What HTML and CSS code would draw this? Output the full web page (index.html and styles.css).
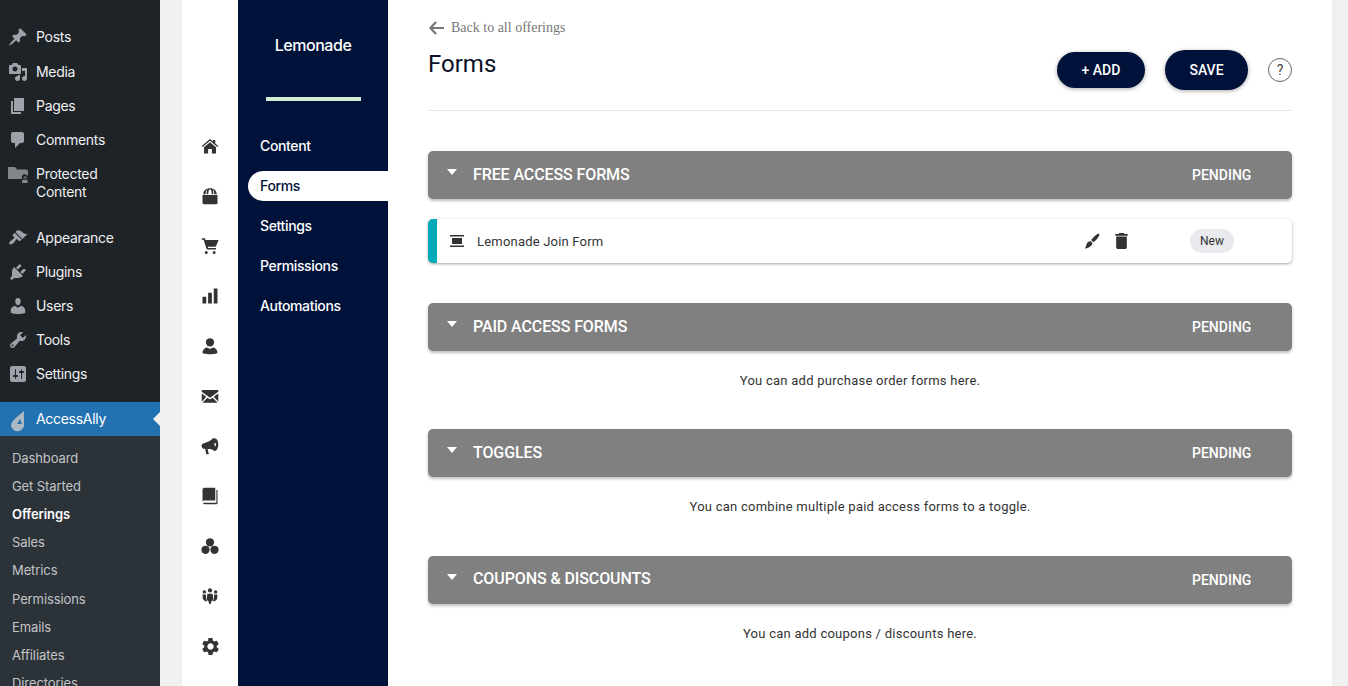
FILE: index.html
```html
<!DOCTYPE html>
<html lang="en">

<head>
    <meta charset="UTF-8">
    <meta name="viewport" content="width=device-width, initial-scale=1.0">
    <title>Forms - AccessAlly</title>
    <link rel="stylesheet" href="styles.css">
</head>

<body>
    <div class="wrap">
        <!-- WordPress admin menu -->
        <nav class="wp-menu">
            <a class="wp-item"><svg class="wp-icon" viewBox="0 0 20 20"><path d="M10.44 3.02l1.82-1.82 6.36 6.35-1.83 1.82c-1.05-.68-2.48-.57-3.41.36l-.75.75c-.92.93-1.04 2.35-.35 3.41l-1.83 1.82-2.41-2.41-2.8 2.79c-.42.42-3.38 2.71-3.8 2.29s1.86-3.39 2.28-3.81l2.79-2.79L4.1 9.36l1.83-1.82c1.05.69 2.48.57 3.4-.36l.75-.75c.93-.92 1.05-2.35.36-3.41z"/></svg>Posts</a>
            <a class="wp-item"><svg class="wp-icon" viewBox="0 0 20 20"><path d="M13 11V4c0-.55-.45-1-1-1h-1.67L9 1H5L3.67 3H2c-.55 0-1 .45-1 1v7c0 .55.45 1 1 1h10c.55 0 1-.45 1-1zM7 4.5c1.38 0 2.5 1.12 2.5 2.5S8.38 9.5 7 9.5 4.5 8.38 4.5 7 5.62 4.5 7 4.5zM14 6h5v10.5c0 1.38-1.12 2.5-2.5 2.5S14 17.88 14 16.5s1.12-2.5 2.5-2.5c.17 0 .34.02.5.05V9h-3V6zm-4 8.05V13h2v3.5c0 1.38-1.12 2.5-2.5 2.5S7 17.88 7 16.5 8.12 14 9.5 14c.17 0 .34.02.5.05z"/></svg>Media</a>
            <a class="wp-item"><svg class="wp-icon" viewBox="0 0 20 20"><path d="M6 15V2h10v13H6zm-1 1h8v2H3V5h2v11z"/></svg>Pages</a>
            <a class="wp-item"><svg class="wp-icon" viewBox="0 0 20 20"><path d="M5 2h9c1.1 0 2 .9 2 2v7c0 1.1-.9 2-2 2h-2l-5 5v-5H5c-1.1 0-2-.9-2-2V4c0-1.1.9-2 2-2z"/></svg>Comments</a>
            <a class="wp-item wp-item-tall"><svg class="wp-icon wp-icon-folder" viewBox="0 0 20 16"><path d="M0 0h7l2 2.500h9.500c.8 0 1.500.7 1.500 1.500v4.600h-1.200a2.600 2.600 0 0 0-4.900 1V12H0z"/><path d="M16 13h3.600v3H14v-3zM15.600 12.600v-1.800a1.500 1.500 0 0 1 3 0v1.800h-.9v-1.800a.6.6 0 0 0-1.200 0v1.800z"/></svg>Protected Content</a>
            <a class="wp-item wp-item-first"><svg class="wp-icon" viewBox="0 0 20 20"><path d="M14.480 11.060L7.410 3.990l1.500-1.500c.5-.56 2.300-.47 3.510.32 1.210.8 1.430 1.280 2.910 2.100 1.180.64 2.450 1.260 4.450.85zm-.71.71L6.700 4.700 4.930 6.470c-.39.39-.39 1.020 0 1.410l1.060 1.060c.39.39.39 1.030 0 1.420-.6.6-1.430 1.110-2.210 1.690-.35.26-.7.53-1.010.84C1.430 13.230.78 15.400 1.500 16.120c.71.72 2.890.07 4.230-1.280.31-.31.58-.66.84-1.010.58-.78 1.090-1.610 1.690-2.210.39-.39 1.030-.39 1.420 0l1.060 1.060c.39.39 1.020.39 1.410 0z"/></svg>Appearance</a>
            <a class="wp-item"><svg class="wp-icon" viewBox="0 0 20 20"><path d="M13.110 4.360L9.870 7.600 8 5.730l3.240-3.240c.35-.34 1.050-.2 1.560.32.52.51.66 1.210.31 1.550zm-8 1.770l.91-1.120 9.010 9.010-1.190.84c-.71.71-2.630 1.160-3.820 1.160H6.140L4.900 17.260c-.59.59-1.540.59-2.120 0-.59-.58-.59-1.530 0-2.120l1.240-1.240v-3.880c0-1.130.4-3.190 1.090-3.890zm7.260 3.970l3.240-3.240c.34-.35 1.040-.21 1.550.31.52.51.66 1.210.31 1.550l-3.240 3.250z"/></svg>Plugins</a>
            <a class="wp-item"><svg class="wp-icon" viewBox="0 0 20 20"><path d="M10 9.250c-2.270 0-2.730-3.440-2.730-3.440C7 4.020 7.820 2 9.970 2c2.160 0 2.980 2.020 2.710 3.810 0 0-.41 3.440-2.680 3.440zm0 2.570L12.720 10c2.390 0 4.520 2.330 4.520 4.530v2.490s-3.650 1.130-7.240 1.130c-3.650 0-7.240-1.130-7.240-1.130v-2.490c0-2.250 1.940-4.480 4.470-4.480z"/></svg>Users</a>
            <a class="wp-item"><svg class="wp-icon" viewBox="0 0 20 20"><path d="M16.680 9.770c-1.340 1.340-3.300 1.670-4.950.99l-5.410 6.520c-.99.99-2.590.99-3.580 0s-.99-2.590 0-3.570l6.520-5.420c-.68-1.650-.35-3.610.99-4.950 1.280-1.280 3.120-1.620 4.720-1.060l-2.890 2.890 2.820 2.820 2.860-2.870c.53 1.580.18 3.390-1.080 4.650zM3.810 16.210c.4.39 1.040.39 1.430 0 .4-.4.4-1.040 0-1.430-.39-.4-1.030-.4-1.430 0-.39.39-.39 1.030 0 1.430z"/></svg>Tools</a>
            <a class="wp-item"><svg class="wp-icon" viewBox="0 0 20 20"><path d="M18 16V4c0-1.100-.9-2-2-2H4c-1.100 0-2 .9-2 2v12c0 1.100.9 2 2 2h12c1.100 0 2-.9 2-2zM8 11h1c.55 0 1 .45 1 1s-.45 1-1 1H8v1.500c0 .28-.22.5-.5.5s-.5-.22-.5-.5V13H6c-.55 0-1-.45-1-1s.45-1 1-1h1V5.500c0-.28.22-.5.5-.5s.5.22.5.5V11zm5-2h-1c-.55 0-1-.45-1-1s.45-1 1-1h1V5.500c0-.28.22-.5.5-.5s.5.22.5.5V7h1c.55 0 1 .45 1 1s-.45 1-1 1h-1v5.500c0 .28-.22.5-.5.5s-.5-.22-.5-.5V9z"/></svg>Settings</a>
            <a class="wp-item wp-item-current"><svg class="wp-icon wp-icon-drop" viewBox="0 0 20 24"><path d="M14 1v12a6.500 6.500 0 1 1-13 3c0-6 8-10 13-15z" fill="#aeb9c1"/><path d="M10 9l1.800 5H7.200z" fill="#2271b1"/></svg>AccessAlly</a>
            <div class="wp-submenu">
                <a class="wp-sub">Dashboard</a>
                <a class="wp-sub">Get Started</a>
                <a class="wp-sub wp-sub-active">Offerings</a>
                <a class="wp-sub">Sales</a>
                <a class="wp-sub">Metrics</a>
                <a class="wp-sub">Permissions</a>
                <a class="wp-sub">Emails</a>
                <a class="wp-sub">Affiliates</a>
                <a class="wp-sub">Directories</a>
            </div>
        </nav>

        <div class="panel">
            <!-- Icon rail -->
            <div class="rail">
                <span class="rail-item"><svg viewBox="0 0 24 24"><path d="M12 2.500L1 12l1.200 1.400L12 5l9.800 8.400L23 12l-4-3.500V4h-3v2z"/><path d="M12 7l-8 6.800V22h5.500v-6h5v6H20v-8.200z"/></svg></span>
                <span class="rail-item"><svg viewBox="0 0 24 24"><path d="M2 10.500h20V21a2 2 0 0 1-2 2H4a2 2 0 0 1-2-2z"/><path d="M3 9.500C3 4.500 7 1.500 12 1.500s9 3 9 8h-3.200c0-3.200-.8-5.500-2.300-6.300.8 1.600 1 4 1 6.300h-2.200c0-3-.4-5.500-2.300-6.800-1.900 1.300-2.300 3.800-2.300 6.800H7.500c0-2.300.2-4.700 1-6.300C7 4 6.200 6.300 6.200 9.500z"/></svg></span>
                <span class="rail-item"><svg viewBox="0 0 24 24"><path d="M7 18.500a2 2 0 1 0 0 4 2 2 0 0 0 0-4zM1 1.500v2h2.500l3.600 11.500c.2.800.9 1.500 1.900 1.500h11v-2H9.500l-.5-1.500h9.500c.9 0 1.500-.5 1.800-1.300L23.500 4H6l-.8-2.500zm16.500 17a2 2 0 1 0 0 4 2 2 0 0 0 0-4z"/></svg></span>
                <span class="rail-item"><svg viewBox="0 0 24 24"><path d="M2 13h5v9H2zM9.500 7.500h5V22h-5zM17 2h5v20h-5z"/></svg></span>
                <span class="rail-item"><svg viewBox="0 0 24 24"><circle cx="12" cy="7" r="5.500"/><path d="M2 21c0-3.500 2.500-6.500 6-7l4 2 4-2c3.500.5 6 3.500 6 7 0 1-4 2-10 2S2 22 2 21z"/></svg></span>
                <span class="rail-item"><svg viewBox="0 0 24 24"><path d="M1 4h22v2.200l-11 8-11-8zM1 8.500l6 4.500-6 6.500zM23 8.500L17 13l6 6.500zM8.600 14.200l3.400 2.500 3.400-2.500 6.800 6.800H1.800z"/></svg></span>
                <span class="rail-item"><svg viewBox="0 0 24 24"><path d="M17 1C13 5 8 7.500 3 8.500 1 9 .5 11 1 13c.4 1.700 1.500 3 3.500 2.700l1 .1L7 23h3.500l-1.700-7c3-.3 7 .5 10.200 2.500z"/><path fill-rule="evenodd" d="M18.500 1.500a4.500 8.500 0 1 1 0 17 4.500 8.500 0 0 1 0-17zm0 6a1.500 2.500 0 1 0 0 5 1.500 2.500 0 0 0 0-5z"/></svg></span>
                <span class="rail-item"><svg viewBox="0 0 24 24"><path d="M2 3.500A2.500 2.500 0 0 1 4.500 1H19v17H5a3 3 0 0 0-3 1z"/><path d="M20.500 4H22v17.500a1.500 1.500 0 0 1-1.500 1.500H5a3 3 0 0 1-2.800-2h18.300z"/></svg></span>
                <span class="rail-item"><svg viewBox="0 0 24 24"><circle cx="12" cy="7" r="5.500"/><circle cx="6" cy="17" r="5.500"/><circle cx="18" cy="17" r="5.500"/></svg></span>
                <span class="rail-item"><svg viewBox="0 0 24 24"><circle cx="12" cy="4.500" r="2.800"/><circle cx="4.500" cy="6.500" r="2.300"/><circle cx="19.500" cy="6.500" r="2.300"/><path d="M8.500 9h7l1 8-2.500 2-1 3.500h-2l-1-3.500-2.500-2z"/><path d="M2 10h4.500l.5 7 1.500 2H5.500L2.500 16zM22 10h-4.500l-.5 7-1.500 2h3l3-3z"/></svg></span>
                <span class="rail-item"><svg class="gear" viewBox="0 0 24 24"><path d="M19.140 12.940c.04-.3.06-.61.06-.94 0-.32-.02-.64-.07-.94l2.030-1.580c.18-.14.23-.41.12-.61l-1.920-3.320c-.12-.22-.37-.29-.59-.22l-2.390.96c-.5-.38-1.030-.7-1.620-.94l-.36-2.540c-.04-.24-.24-.41-.48-.41h-3.840c-.24 0-.43.17-.47.41l-.36 2.540c-.59.24-1.130.57-1.620.94l-2.390-.96c-.22-.08-.47 0-.59.22L2.740 8.870c-.12.21-.08.47.12.61l2.030 1.580c-.05.3-.09.63-.09.94s.02.64.07.94l-2.030 1.580c-.18.14-.23.41-.12.61l1.920 3.320c.12.22.37.29.59.22l2.390-.96c.5.38 1.030.7 1.620.94l.36 2.540c.05.24.24.41.48.41h3.840c.24 0 .44-.17.47-.41l.36-2.540c.59-.24 1.130-.56 1.620-.94l2.390.96c.22.08.47 0 .59-.22l1.920-3.320c.12-.22.07-.47-.12-.61l-2.010-1.580zM12 15.600c-1.980 0-3.600-1.620-3.600-3.600s1.620-3.600 3.600-3.600 3.600 1.620 3.600 3.600-1.620 3.600-3.600 3.600z"/></svg></span>
            </div>

            <!-- Offering sidebar -->
            <div class="offering">
                <div class="offering-name">Lemonade</div>
                <div class="offering-bar"></div>
                <a class="offering-link">Content</a>
                <a class="offering-link active">Forms</a>
                <a class="offering-link">Settings</a>
                <a class="offering-link">Permissions</a>
                <a class="offering-link">Automations</a>
            </div>

            <main class="main">
                <header class="main-head">
                    <div>
                        <a class="back"><svg viewBox="0 0 16 14"><path d="M7 1L1.500 7 7 13M1.500 7H15"/></svg>Back to all offerings</a>
                        <h1>Forms</h1>
                    </div>
                    <div class="actions">
                        <button class="btn btn-add">+ ADD</button>
                        <button class="btn btn-save">SAVE</button>
                        <span class="help">?</span>
                    </div>
                </header>

                <section class="section">
                    <div class="section-bar"><span class="caret"></span><h2>FREE ACCESS FORMS</h2><span class="status">PENDING</span></div>
                    <div class="form-row">
                        <svg class="form-icon" viewBox="0 0 14 12"><path d="M0 0h14v1.500H0zM2 3h10v6H2zM0 10.500h14V12H0z"/></svg>
                        <span class="form-name">Lemonade Join Form</span>
                        <svg class="row-icon brush" viewBox="0 0 18 18"><path d="M16.500.5c.7.4 1 1 .8 1.700-1 3-3.800 6.200-6.800 8.300L8 8C10 5 13.500 1.500 16.500.5zM7.200 9l2.300 2.300c-.3 2.400-2.400 5.500-8.800 6.200 1.500-1.500 1.700-3 2-4.500.4-2 2.500-3.800 4.500-4z"/></svg>
                        <svg class="row-icon trash" viewBox="5 3 14 18"><path d="M6 19c0 1.100.9 2 2 2h8c1.100 0 2-.9 2-2V7H6v12zM19 4h-3.500l-1-1h-5l-1 1H5v2h14V4z"/></svg>
                        <span class="badge">New</span>
                    </div>
                </section>

                <section class="section">
                    <div class="section-bar"><span class="caret"></span><h2>PAID ACCESS FORMS</h2><span class="status">PENDING</span></div>
                    <p class="empty">You can add purchase order forms here.</p>
                </section>

                <section class="section">
                    <div class="section-bar"><span class="caret"></span><h2>TOGGLES</h2><span class="status">PENDING</span></div>
                    <p class="empty">You can combine multiple paid access forms to a toggle.</p>
                </section>

                <section class="section">
                    <div class="section-bar"><span class="caret"></span><h2>COUPONS &amp; DISCOUNTS</h2><span class="status">PENDING</span></div>
                    <p class="empty">You can add coupons / discounts here.</p>
                </section>
            </main>
        </div>
    </div>
</body>

</html>
```

FILE: styles.css
```css
* {
    box-sizing: border-box;
}

html,
body {
    height: 100%;
}

body {
    margin: 0;
    background-color: #f0f0f1;
    font-family: Roboto, sans-serif;
    overflow: hidden;
}

.wrap {
    display: flex;
    height: 686px;
    overflow: hidden;
}

/* WordPress menu */
.wp-menu {
    width: 160px;
    flex-shrink: 0;
    padding-top: 20px;
    background-color: #1d2327;
    font-family: Inter, sans-serif;
    font-size: 14px;
    letter-spacing: -0.3px;
    color: #f0f0f1;
}

.wp-item {
    display: flex;
    align-items: center;
    position: relative;
    height: 34px;
    padding-left: 36px;
    line-height: 18px;
}

.wp-item:first-child {
    height: 35px;
    padding-bottom: 1px;
}

.wp-item-tall {
    align-items: flex-start;
    height: 52px;
    padding-top: 8px;
    padding-right: 20px;
}

.wp-item-first {
    margin-top: 12px;
}

.wp-item-current {
    margin-top: 11px;
    background-color: #2271b1;
    color: #fff;
}

/* little arrow pointing at the page */
.wp-item-current::after {
    content: "";
    position: absolute;
    right: 0;
    top: 10px;
    border: 7px solid transparent;
    border-right-color: #f0f0f1;
    border-left-width: 0;
}

.wp-icon {
    position: absolute;
    left: 8px;
    top: 7px;
    width: 20px;
    height: 20px;
    fill: #9ca2a7;
}

.wp-icon-folder {
    top: 10px;
    width: 20px;
    height: 16px;
    fill: #808689;
}

.wp-icon-drop {
    left: 10px;
    top: 8px;
    width: 20px;
    height: 24px;
}

.wp-submenu {
    padding-top: 8px;
    height: 260px;
    background-color: #2c3338;
}

.wp-sub {
    display: block;
    height: 28.11px;
    padding-left: 12px;
    font-size: 13px;
    line-height: 28px;
    letter-spacing: -0.1px;
    color: #c3c4c7;
}

.wp-sub-active {
    font-weight: 600;
    color: #fff;
}

/* White panel */
.panel {
    display: flex;
    width: 1150px;
    margin-left: 22px;
    background-color: #fff;
}

.rail {
    width: 56px;
    flex-shrink: 0;
    padding-top: 121px;
}

.rail-item {
    display: flex;
    align-items: center;
    justify-content: center;
    height: 50px;
}

.rail-item svg {
    width: 18px;
    height: 18px;
    fill: #333;
}

.rail-item svg.gear {
    width: 21px;
    height: 21px;
}

.offering {
    width: 150px;
    flex-shrink: 0;
    padding-top: 36px;
    padding-left: 10px;
    background-color: #00113a;
    font-family: Inter, sans-serif;
    font-size: 14px;
    font-weight: 500;
    letter-spacing: -0.35px;
    color: #fff;
}

.offering-name {
    padding-right: 10px;
    text-align: center;
    font-size: 16px;
    line-height: 19px;
    letter-spacing: -0.45px;
}

.offering-bar {
    width: 95px;
    height: 4px;
    margin: 42px 0 30px 18px;
    background-color: #d5ecd4;
}

.offering-link {
    display: block;
    height: 30px;
    margin-bottom: 10px;
    padding-left: 12px;
    line-height: 30px;
}

.offering-link.active {
    background-color: #fff;
    border-radius: 15px 0 0 15px;
    color: #00113a;
}

/* Main content */
.main {
    flex: 1;
    padding: 0 40px;
}

.main-head {
    display: flex;
    justify-content: space-between;
    height: 111px;
    border-bottom: 1px solid #e4e4e4;
}

.back {
    display: flex;
    align-items: center;
    margin-top: 19px;
    font-family: "Liberation Serif", serif;
    font-size: 14px;
    line-height: 17px;
    color: #777;
}

.back svg {
    width: 16px;
    height: 14px;
    margin: 0 6px 0 1px;
    fill: none;
    stroke: #777;
    stroke-width: 2.2;
}

h1 {
    margin: 14px 0 0;
    font-size: 24px;
    font-weight: 400;
    line-height: 28px;
    color: #0a1128;
}

.actions {
    display: flex;
    align-items: center;
    gap: 20px;
    height: 40px;
    margin-top: 50px;
}

.btn {
    border: none;
    border-radius: 20px;
    background-color: #00113a;
    box-shadow: 0 1px 4px rgba(0, 0, 0, 0.35);
    font-family: Roboto, sans-serif;
    font-size: 14px;
    font-weight: 500;
    color: #fff;
}

.btn-add {
    width: 88px;
    height: 36px;
}

.btn-save {
    width: 83px;
    height: 40px;
}

.help {
    display: flex;
    align-items: center;
    justify-content: center;
    width: 24px;
    height: 24px;
    border: 1px solid #666;
    border-radius: 50%;
    font-size: 14px;
    color: #444;
}

.main-head + .section {
    margin-top: 40px;
}

.section:nth-of-type(2) {
    margin-top: 40px;
}

.section-bar {
    display: flex;
    align-items: center;
    position: relative;
    height: 48px;
    padding-left: 45px;
    border-radius: 5px;
    background-color: #808080;
    box-shadow: 0 2px 3px rgba(0, 0, 0, 0.25);
    color: #fff;
}

.caret {
    position: absolute;
    left: 19px;
    top: 18px;
    border-style: solid;
    border-width: 6px 5px 0;
    border-color: #fff transparent transparent;
}

.section-bar h2 {
    flex: 1;
    margin: 0 0 2px;
    font-size: 16px;
    font-weight: 500;
    letter-spacing: -0.1px;
}

.status {
    width: 100px;
    font-size: 14px;
    font-weight: 500;
}

.form-row {
    display: flex;
    align-items: center;
    height: 44px;
    margin-top: 20px;
    border-left: 9px solid #00a9b7;
    border-radius: 5px;
    background-color: #fff;
    box-shadow: 0 1px 3px rgba(0, 0, 0, 0.35);
    font-size: 13px;
    color: #333;
}

.form-icon {
    width: 14px;
    height: 12px;
    margin-left: 13px;
    fill: #333;
}

.form-name {
    width: 607px;
    margin-left: 13px;
    letter-spacing: 0.2px;
}

.row-icon {
    fill: #333;
}

.brush {
    width: 16px;
    height: 16px;
}

.trash {
    width: 13px;
    height: 16px;
    margin-left: 15px;
}

.badge {
    width: 44px;
    height: 24px;
    margin-left: 62px;
    border-radius: 12px;
    background-color: #e8eaed;
    font-size: 12px;
    line-height: 24px;
    text-align: center;
}

.empty {
    margin: 21px 0 39.400px;
    font-size: 13px;
    line-height: 18px;
    letter-spacing: 0.25px;
    text-align: center;
    color: #333;
}
```
